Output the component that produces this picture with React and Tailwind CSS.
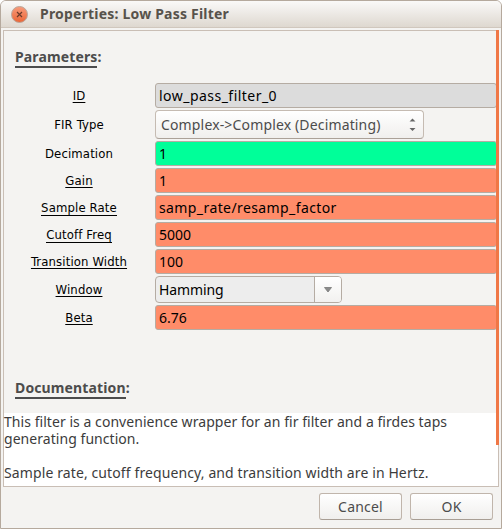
const rows = [
  { label: 'ID', value: 'low_pass_filter_0', underline: true, tone: 'bg-[#dcdcdc]', row: 'h-[27px]', tracking: 'tracking-[0.47px]' },
  { label: 'FIR Type', value: 'Complex->Complex (Decimating)', kind: 'select', row: 'h-[31px]', shift: 'h-[29px]' },
  { label: 'Decimation', value: '1', tone: 'bg-[#00ff99]', row: 'h-[27px]' },
  { label: 'Gain', value: '1', underline: true, tone: 'bg-[#ff8c69]', row: 'h-[27px]' },
  { label: 'Sample Rate', value: 'samp_rate/resamp_factor', underline: true, deep: true, tone: 'bg-[#ff8c69]', row: 'h-[27px]', tracking: 'tracking-[0.4px]' },
  { label: 'Cutoff Freq', value: '5000', underline: true, deep: true, tone: 'bg-[#ff8c69]', row: 'h-[27px]' },
  { label: 'Transition Width', value: '100', underline: true, tone: 'bg-[#ff8c69]', row: 'h-[27px]' },
  { label: 'Window', value: 'Hamming', underline: true, kind: 'combo', row: 'h-[29px]', shift: 'h-[27px]' },
  { label: 'Beta', value: '6.76', underline: true, tone: 'bg-[#ff8c69]', row: 'h-[27px]' },
];

function Field({ row }) {
  if (row.kind === 'select') {
    return (
      <div className="flex h-[29px] w-[269px] items-center justify-between rounded-[4px] border border-[#c5bbb2] border-b-[#aba198] bg-gradient-to-b from-white to-[#f0efed] pl-[5px] pr-[7px] text-[#4c4c4c]">
        <span className="tracking-[0.15px]">{row.value}</span>
        <svg width="7" height="13" viewBox="0 0 7 13" fill="#666">
          <path d="M.5 3.5 3.5.5l3 3zM.5 10h6l-3 3z" />
        </svg>
      </div>
    );
  }
  if (row.kind === 'combo') {
    return (
      <div className="flex h-[27px] w-[187px] rounded-[4px] border border-[#b5aca3] bg-[#ededed]">
        <span className="flex flex-1 items-center pl-[3px] tracking-[-0.1px]">{row.value}</span>
        <span className="flex w-[27px] items-center justify-center rounded-r-[3px] border-l border-[#b5aca3] bg-gradient-to-b from-white to-[#f2f1ef]">
          <svg width="8" height="6" viewBox="0 0 8 6">
            <path d="M.5.5h7L4 5z" fill="#8b8b8b" stroke="#777" strokeWidth=".8" />
          </svg>
        </span>
      </div>
    );
  }
  return (
    <div className={`flex h-[25px] w-[342px] items-center rounded-[3px] border border-[#b5aca3] pl-[3px] ${row.tone}`}>
      <span className={row.tracking}>{row.value}</span>
    </div>
  );
}

function Heading({ children }) {
  return (
    <h2 className="text-[14px] leading-[20px] font-bold text-[#4c4c4c]">
      <span className="border-b-2 border-[#4c4c4c] tracking-[0.13px]">{children}</span>:
    </h2>
  );
}

export default function App() {
  return (
    <div className="h-[529px] w-[502px] bg-white font-['Noto_Sans',sans-serif] text-[14px] leading-[17px]">
      <div className="flex h-full flex-col overflow-hidden rounded-t-[6px] border border-[#b5a99d] bg-[#f4f3f1]">
        <header className="flex h-[27px] shrink-0 items-center border-b border-[#d0c7bd] bg-gradient-to-b from-[#faf9f8] to-[#ded8d0] pl-[10px]">
          <svg width="17" height="17" viewBox="0 0 17 17">
            <defs>
              <linearGradient id="close" x2="0" y2="1">
                <stop stopColor="#f89b7b" />
                <stop offset="1" stopColor="#ea6536" />
              </linearGradient>
            </defs>
            <circle cx="8.5" cy="8.5" r="8" fill="url(#close)" stroke="#b9a79c" />
            <path d="m6 6 5 5m0-5-5 5" stroke="#6b3a2a" strokeWidth="1.2" />
          </svg>
          <h1 className="ml-[12px] pb-[2px] text-[14px] font-bold tracking-[0.2px] text-[#57524b]">Properties: Low Pass Filter</h1>
        </header>
        <div className="relative mx-[2px] mt-[2px] flex h-[457px] w-[496px] shrink-0 flex-col border border-[#c9beb5]">
          <div className="pt-[16px] pl-[11px]"><Heading>Parameters</Heading></div>
          <div className="mt-[16px] text-black">
            {rows.map((row) => (
              <div key={row.label} className={`flex ${row.row}`}>
                <div className={`flex w-[151px] shrink-0 items-center justify-center pr-px font-['DejaVu_Sans_Condensed','DejaVu_Sans',sans-serif] text-[13px] leading-[15px] tracking-[0.13px] ${row.shift || 'h-[25px]'}`}>
                  <span className={row.underline ? (row.deep ? 'border-b border-black' : 'underline underline-offset-2') : ''}>{row.label}</span>
                </div>
                <Field row={row} />
              </div>
            ))}
          </div>
          <div className="mt-[46px] pl-[11px]"><Heading>Documentation</Heading></div>
          <p className="mt-auto h-[73px] bg-white tracking-[0.05px] text-[#3c3c3c]">
            This filter is a convenience wrapper for an fir filter and a firdes taps generating function.
            <br />
            <br />
            <span className="tracking-[0.11px]">Sample rate, cutoff frequency, and transition width are in Hertz.</span>
          </p>
          <div className="absolute -top-px right-[-1px] h-[415px] w-[3px] bg-[#f07746]" />
        </div>
        <footer className="mt-[6px] mr-[8px] flex justify-end gap-[8px] text-[#4c4c4c]">
          {['Cancel', 'OK'].map((label) => (
            <button key={label} className="h-[27px] w-[83px] rounded-[3px] border border-[#c0b5ab] border-b-[#a89e94] bg-gradient-to-b from-white to-[#f0efed] tracking-[0.2px]">{label}</button>
          ))}
        </footer>
      </div>
    </div>
  );
}
